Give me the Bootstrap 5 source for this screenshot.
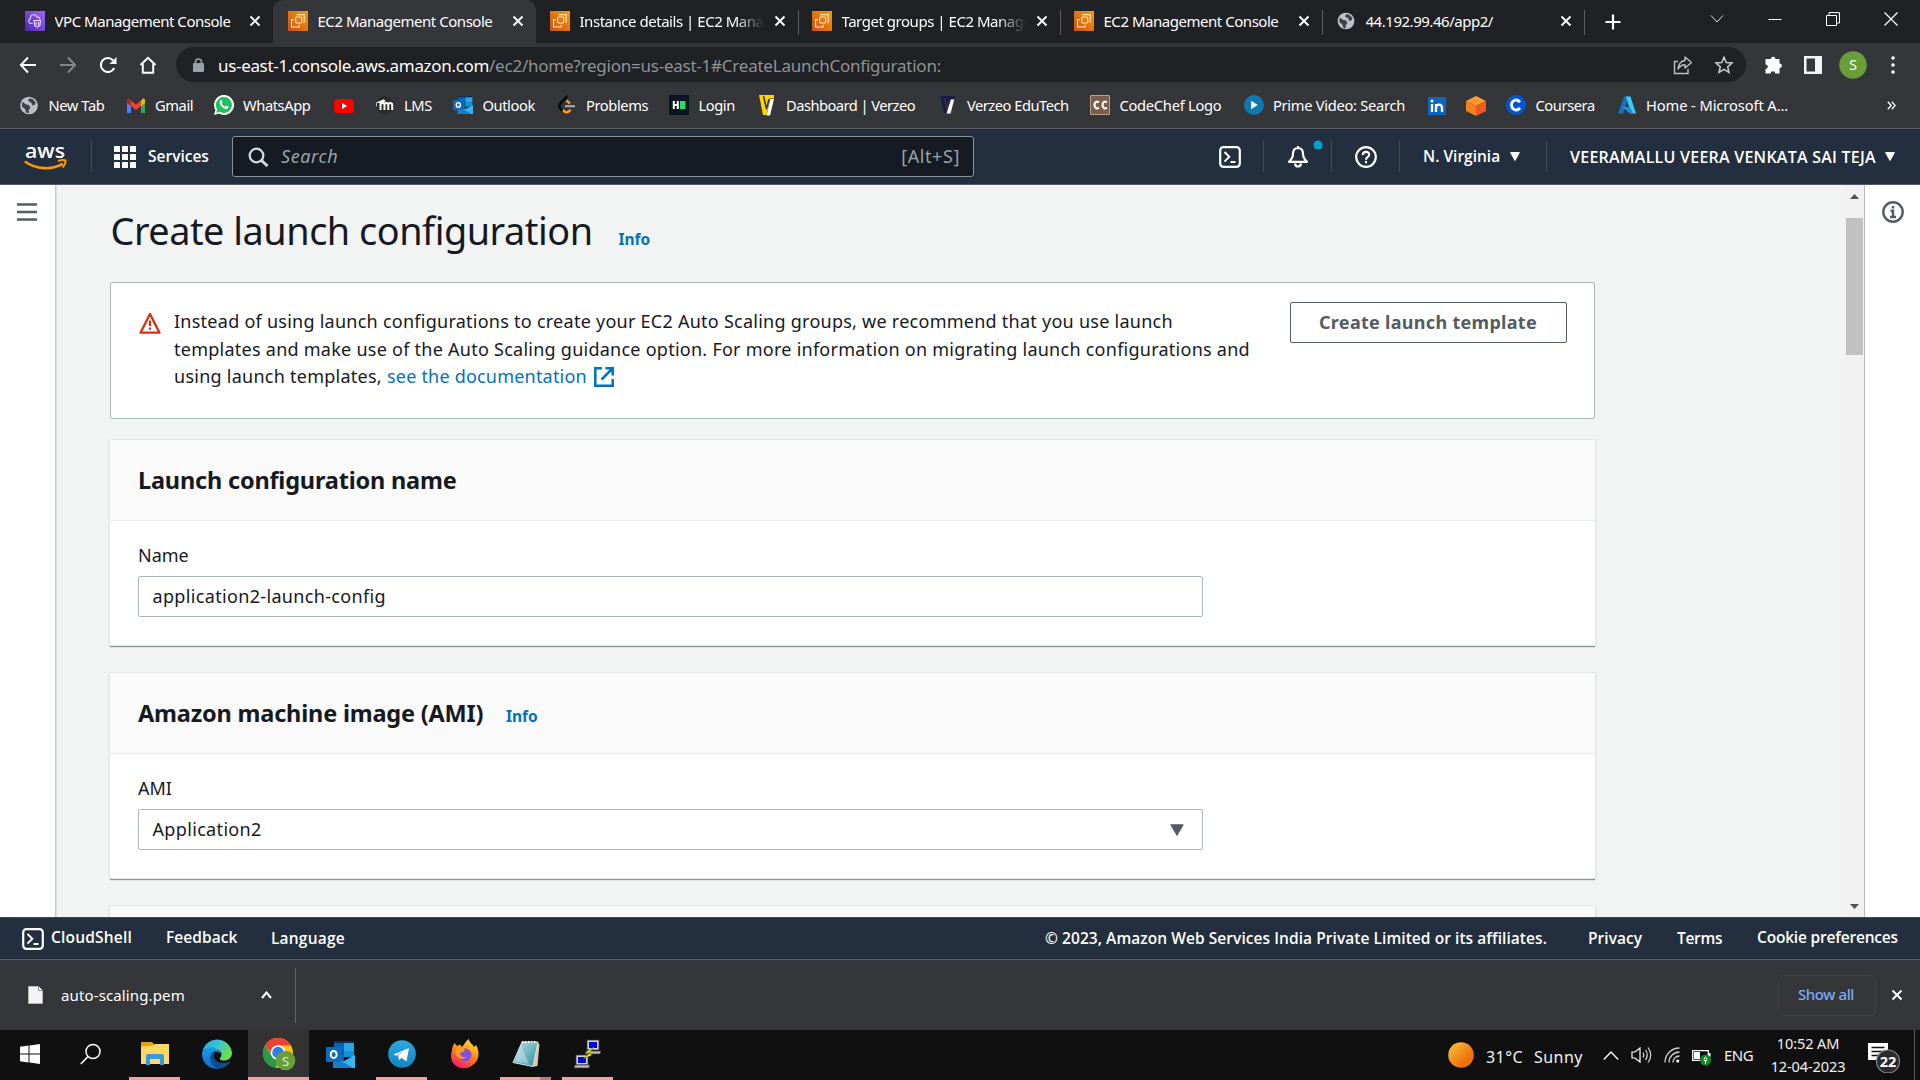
<!DOCTYPE html>
<html lang="en">
<head>
<meta charset="utf-8">
<meta name="viewport" content="width=device-width, initial-scale=1">
<title>EC2 Management Console</title>
<link href="https://cdn.jsdelivr.net/npm/bootstrap@5.3.0/dist/css/bootstrap.min.css" rel="stylesheet">
<style>
body{width:1920px;height:1080px;overflow:hidden;font-family:"Noto Sans","Open Sans",sans-serif;color:#16191f;background:#f2f3f3;font-size:18px}
svg{display:block;flex:none}
a{text-decoration:none;color:inherit}
.txt{white-space:nowrap;flex:none;display:block}
/* browser tabs */
.tabstrip{height:43px;background:#202124;color:#fff;padding-left:11px;font-size:15px;letter-spacing:-.47px}
.tab{width:262px;height:43px;padding:0 0 1px 14px;flex:none;position:relative}
.tab .txt{width:184px;margin-left:9.5px;overflow:hidden;line-height:24px}
.tab .x{margin-left:10px}
.tab.on{background:#35363a;border-radius:10px 10px 0 0;width:263px;padding-left:15px}
.tab.fade-end .txt{-webkit-mask-image:linear-gradient(90deg,#000 155px,transparent 184px);mask-image:linear-gradient(90deg,#000 155px,transparent 184px)}
.tab.sep::after{content:"";position:absolute;right:-1px;top:10px;width:1px;height:25px;background:#5a5c60}
.newtab{margin-left:18px}
.winbtns{padding-right:22px;gap:44px;height:37px;margin-left:auto}
/* toolbar */
.toolbar{height:43px;background:#35363a;padding-left:19px}
.navicons{gap:22px}
.omni{width:1570px;height:35px;border-radius:18px;background:#202124;margin-left:19px;padding:0 12px 0 17px;color:#8f9296;font-size:17px}
.omni .txt{padding-top:2px;letter-spacing:-.233px}
.omni .host{color:#fff;margin-left:14px;letter-spacing:-.326px}
.omniacts{gap:21px}
.puzzle{margin-left:18px}.panelicon{margin-left:20px}.avatar{margin-left:17px}.dots{margin-left:24px}
.marks{height:43px;background:#35363a;border-bottom:1px solid #5f6165;color:#fff;font-size:14.7px;letter-spacing:-.42px;padding:0 24px 3px 19px;box-sizing:border-box}
.bm{gap:9.5px;flex:none}
.bm:nth-child(1){width:106.5px}.bm:nth-child(2){width:88px}.bm:nth-child(3){width:120.5px}.bm:nth-child(4){width:40.5px}
.bm:nth-child(5){width:78.5px}.bm:nth-child(6){width:103.5px}.bm:nth-child(7){width:112.5px}.bm:nth-child(8){width:87.5px}
.bm:nth-child(9){width:181px;letter-spacing:-.54px}.bm:nth-child(10){width:152.5px;letter-spacing:-.5px}.bm:nth-child(11){width:153.5px;letter-spacing:-.28px}.bm:nth-child(12){width:183px;letter-spacing:-.3px}
.bm:nth-child(13){width:39.5px}.bm:nth-child(14){width:40px}.bm:nth-child(15){width:110.5px}.bm:nth-child(16){letter-spacing:-.1px}
/* console header */
.awsbar{height:56px;background:#232f3e;border-bottom:1px solid #545b64;color:#fff;padding-left:24px;font-family:"Open Sans","Noto Sans",sans-serif;font-weight:600;font-size:15.5px}
.vline{width:1px;height:31px;background:#414d5c;flex:none;margin:0 23px 0 22px}
.vline.first{margin:0 22px 0 23px}
.vline.last{margin:0 23px 0 26px}
.services{width:61px;margin-left:12px}
.region{width:87px}
.account{width:315px;font-size:16px;letter-spacing:.24px}
.shellbtn{margin-left:245px}
.belldot{left:26px;top:-6px}
.sbox{width:742px;height:41px;border:1px solid #879596;border-radius:3px;background:#161a22;padding:0 13px 0 15px;color:#95a5a6;font-family:"Noto Sans",sans-serif;font-weight:400;font-size:18px;margin-left:23px;letter-spacing:.6px}
.sbox i{margin-left:12px}
/* page */
.stage{height:732px}
.rail{width:56px;background:#fff;flex:none}
.rail.lft{border-right:1px solid #c5cccd;box-shadow:1px 0 1px rgba(0,0,0,.08);padding:18px 0 0 17px}
.rail.rgt{border-left:1px solid #b8bebf;padding:16px 0 0 17px}
.sbar{width:20px;background:#f1f1f1;flex:none;padding:9px 0 8px 2px}
.thumb{width:17px;height:137px;background:#c1c1c1;margin-top:19px}
.main{width:1788px;padding:21px 249px 0 54px;overflow:hidden;flex:none}
.ttl{font-size:37.8px;line-height:50px;font-weight:400;margin:0 0 0 .5px;letter-spacing:-.46px;width:508px}
.info{color:#0073bb;font-weight:700;font-size:15.5px;line-height:20px}
.note{width:1485px;height:137px;border:1px solid #aab7b8;border-radius:2px;background:#fff;margin-top:26px;padding:19px 27px 0 28px}
.note .warn{margin-top:10px;margin-left:-.5px}
.note p{font-size:18px;line-height:27.5px;margin:6px 0 0 13.5px;letter-spacing:.255px}
.note .pre{width:213px}
.note .lk{color:#0073bb;width:207px;letter-spacing:.2px}
.note .ext{margin-top:4px}
.cbtn{width:277px;height:41px;border:1px solid #545b64;border-radius:2px;color:#545b64;font-weight:700;font-size:18px;line-height:39px;padding:0 0 0 28px;text-align:left;letter-spacing:.3px}
.panel{width:1485px;background:#fff;margin-top:28px;box-shadow:0 0 0 1px #e3e7e7,1px 0 1px #b9c0c1,-1px 0 1px #c9cfd0,0 2px 1px #879596}
.note + .panel{margin-top:21px}
.panel header{height:81px;background:#fafafa;border-bottom:1px solid #eaeded;padding:22px 0 0 28px}
.panel h2{font-size:23.5px;line-height:36px;font-weight:700;margin:0;letter-spacing:-.19px}
.panel h2.withinfo{width:368px}
.fld{padding:20px 0 28px 28px}
.fld .form-label{font-size:18px;line-height:28px;margin:0 0 7px;display:block;width:max-content}
.fld .box{width:1065px;height:41px;border:1px solid #aab7b8;border-radius:2px;font-size:18px;padding:0 18px 0 13.5px;letter-spacing:.34px}
/* footer */
.foot{height:43px;background:#232f3e;border-top:1px solid #3c4857;border-bottom:1px solid #5f6165;color:#fff;padding-left:22px;font-family:"Open Sans","Noto Sans",sans-serif;font-weight:600;font-size:15.5px;letter-spacing:.06px}
.foot .txt{padding-bottom:1px}
.foot .low{padding:1px 0 0}
.f1{width:115px;margin-left:7px;letter-spacing:.19px}.f2{width:105px}.f3{width:774px;letter-spacing:.2px}.f4{width:543px}.f5{width:89px}.f6{width:80px;letter-spacing:-.3px}.f7{letter-spacing:-.19px}
.dl{height:70px;background:#35363a;color:#fff;font-size:15px;padding-left:28px}
.fname{margin-left:18px;width:200px;letter-spacing:.13px}
.dlsep{width:1px;height:55px;background:#606266;margin-left:23px}
.showall{width:98px;height:41px;border:1px solid #404146;border-radius:5px;color:#7baaf7;font-weight:500;padding:0 0 0 19px;line-height:37px;letter-spacing:-.4px}
.dlclose{margin:0 17px 0 15px}
/* taskbar */
.task{height:50px;background:#101010;color:#f2f2f2;font-size:16px}
.app{width:62px;height:50px;flex:none;position:relative;padding-bottom:2px}
.app.win{width:60px}
.app.run::after{content:"";position:absolute;bottom:0;left:5px;width:51px;height:3px;background:#ff9ba3}
.app.files{margin-left:2px}
.app.cur{background:#333;width:61px}.app.cur::after{left:0;width:61px}
.app.two::after{background:linear-gradient(90deg,#ff9ba3 40px,#c9757d 40px)}
.temp{margin-left:12px;width:48px;padding-top:3px;letter-spacing:.43px}
.sky{width:69px;padding-top:3px;letter-spacing:.47px}
.tray{gap:12px}
.lang{margin-left:12px;width:42px;font-size:15px;letter-spacing:-.5px}
.clock{font-size:14.5px;line-height:23px;width:84px;letter-spacing:-.1px}
.bubble{margin:2px 5px 0 18px}
.peek{width:1px;height:50px;background:#5a5a5a;margin:0 5px 0 7px}
</style>
<script src="https://cdn.jsdelivr.net/npm/bootstrap@5.3.0/dist/js/bootstrap.bundle.min.js"></script>
</head>
<body>
<svg width="0" height="0" class="position-absolute">
<defs>
<linearGradient id="gO" x1="0" y1="1" x2="1" y2="0"><stop offset="0" stop-color="#c8511b"/><stop offset="1" stop-color="#f90"/></linearGradient>
<linearGradient id="gP" x1="0" y1="1" x2="1" y2="0"><stop offset="0" stop-color="#4d27a8"/><stop offset="1" stop-color="#a166ff"/></linearGradient>
<linearGradient id="gS" x1="0" y1="0" x2="1" y2="1"><stop offset="0" stop-color="#f8c63a"/><stop offset=".7" stop-color="#f0720f"/></linearGradient>
<linearGradient id="gE" x1="0" y1="0" x2="1" y2=".4"><stop offset="0" stop-color="#2fa8e6"/><stop offset=".5" stop-color="#35c1d8"/><stop offset="1" stop-color="#6be04c"/></linearGradient>
<linearGradient id="gE2" x1="0" y1="0" x2="0" y2="1"><stop offset="0" stop-color="#1b9de2"/><stop offset="1" stop-color="#0b6bd0"/></linearGradient>
<linearGradient id="gF" x1=".8" y1="0" x2=".3" y2="1"><stop offset="0" stop-color="#ffe22e"/><stop offset=".5" stop-color="#ff8a16"/><stop offset="1" stop-color="#f5156c"/></linearGradient>
<linearGradient id="gN" x1="0" y1="0" x2="1" y2="1"><stop offset="0" stop-color="#b9e3ea"/><stop offset="1" stop-color="#2c8ba0"/></linearGradient>
<linearGradient id="gT" x1="0" y1="0" x2="0" y2="1"><stop offset="0" stop-color="#2ba8e2"/><stop offset="1" stop-color="#1584bf"/></linearGradient>
<symbol id="ec2" viewBox="0 0 20 20"><path fill="url(#gO)" d="M0 0h20v20H0z"/><g fill="none" stroke="#fbe5d0" stroke-width="1.1"><rect x="7.7" y="6" width="6" height="6" rx="1"/><path d="M9 4.2V3.6h7.2v7.6h-1M5.8 8.6H3.6V16h7.6v-2.200"/></g></symbol>
<symbol id="vpc" viewBox="0 0 20 20"><path fill="url(#gP)" d="M0 0h20v20H0z"/><g fill="none" stroke="#eadfff" stroke-width="1.1"><path d="M7.500 12.500H6A2.600 2.600 0 0 1 5.400 7.500C5.200 3.200 11 2.500 12 6c1.700-.2 2.800.8 2.800 2.200"/><path d="M9 9.500h6.500l-.6 5c-.4 1.800-4.900 1.800-5.300 0zM11 11v3.600M13.500 11v3.600"/></g></symbol>
<symbol id="x" viewBox="0 0 12 12"><path d="M1.500 1.500l9 9M10.500 1.500l-9 9" stroke="#fff" stroke-width="1.9"/></symbol>
<symbol id="globe" viewBox="0 0 20 20"><circle cx="10" cy="10" r="9.300" fill="#bdc1c6"/><path d="M3 6l4 3 3 .5 1.500 3-2 2.500.5 3-3-.5-1-3.500-3.500-3zM10 2.500l-1 2.500 3.500 2 1 3 3-1 .5-2.500-3.500-3.500z" fill="#3f4246"/></symbol>
<symbol id="shell" viewBox="0 0 22 22"><rect x="1.200" y="1.200" width="19.600" height="19.600" rx="3.200" fill="none" stroke="#fff" stroke-width="2.200"/><path d="M5.500 6l4.800 4.800-4.800 4.800M11.500 16h5" fill="none" stroke="#fff" stroke-width="2"/></symbol>
<symbol id="car" viewBox="0 0 10 9"><path d="M.6.5h8.800L5 8.500z" fill="#fff" stroke="#fff" stroke-linejoin="round"/></symbol>
<symbol id="ol" viewBox="0 0 29 27" preserveAspectRatio="none"><path fill="#0364b8" d="M8 1h10v9H8z"/><path fill="#28a8ea" d="M18 1h10v9H18z"/><path fill="#0a5ea8" d="M8 10h10v9H8z"/><path fill="#1490df" d="M18 10h10v6H18z"/><path fill="#0f2f5c" d="M8 0h20v2H8z"/><path fill="#35b8f1" d="M29 14v13H7V16l11 4z"/><path fill="#1a7fd0" d="M7 15v12h20z"/><rect y="6" width="15.500" height="15" rx="1.300" fill="#0f6cbd"/><ellipse cx="7.700" cy="13.400" rx="3" ry="3.500" fill="none" stroke="#fff" stroke-width="2"/></symbol>
</defs></svg>

<nav class="tabstrip d-flex align-items-center" aria-label="Tabs">
  <div class="tab d-flex align-items-center"><svg width="20" height="20"><use href="#vpc"/></svg><span class="txt">VPC Management Console</span><svg class="x" width="12" height="12"><use href="#x"/></svg></div>
  <div class="tab on d-flex align-items-center"><svg width="20" height="20"><use href="#ec2"/></svg><span class="txt">EC2 Management Console</span><svg class="x" width="12" height="12"><use href="#x"/></svg></div>
  <div class="tab sep fade-end d-flex align-items-center"><svg width="20" height="20"><use href="#ec2"/></svg><span class="txt">Instance details | EC2 Manag</span><svg class="x" width="12" height="12"><use href="#x"/></svg></div>
  <div class="tab sep fade-end d-flex align-items-center"><svg width="20" height="20"><use href="#ec2"/></svg><span class="txt">Target groups | EC2 Manage</span><svg class="x" width="12" height="12"><use href="#x"/></svg></div>
  <div class="tab sep d-flex align-items-center"><svg width="20" height="20"><use href="#ec2"/></svg><span class="txt">EC2 Management Console</span><svg class="x" width="12" height="12"><use href="#x"/></svg></div>
  <div class="tab sep d-flex align-items-center"><svg width="20" height="18"><use href="#globe"/></svg><span class="txt">44.192.99.46/app2/</span><svg class="x" width="12" height="12"><use href="#x"/></svg></div>
  <svg class="newtab" width="22" height="16" viewBox="0 0 18 16"><path d="M9 .5v15M1.500 8h15" stroke="#fff" stroke-width="2.200"/></svg>
  <div class="winbtns d-flex align-items-center align-self-start">
    <svg width="14" height="14" viewBox="0 0 14 14"><path d="M1 3.500l6 6.500 6-6.500" fill="none" stroke="#ddd"/></svg>
    <svg width="14" height="14" viewBox="0 0 14 14"><path d="M.5 7.500h13" stroke="#fff"/></svg>
    <svg width="14" height="14" viewBox="0 0 14 14"><path d="M.5 3.500h10v10H.5zM3 3V.6h10.500V11H11" fill="none" stroke="#fff"/></svg>
    <svg width="14" height="14" viewBox="0 0 14 14"><path d="M.5.500l13 13M13.500.500l-13 13" stroke="#fff" stroke-width="1.200"/></svg>
  </div>
</nav>

<div class="toolbar d-flex align-items-center">
  <div class="navicons d-flex">
    <svg width="18" height="18" viewBox="0 0 18 18"><path d="M9 1.500L1.800 9 9 16.500M2 9h15" fill="none" stroke="#fff" stroke-width="1.900"/></svg>
    <svg width="18" height="18" viewBox="0 0 18 18"><path d="M9 1.500L16.200 9 9 16.500M16 9H1" fill="none" stroke="#85878a" stroke-width="1.900"/></svg>
    <svg width="18" height="18" viewBox="0 0 18 18"><path d="M15.200 12A7 7 0 1 1 14 4.200" fill="none" stroke="#fff" stroke-width="2"/><path d="M17.500 1v7h-7z" fill="#fff"/></svg>
    <svg width="18" height="18" viewBox="0 0 18 18"><path d="M1.500 9L9 1.800 16.500 9M3.800 7.500v9.300h10.400V7.500" fill="none" stroke="#fff" stroke-width="1.900"/></svg>
  </div>
  <div class="omni d-flex align-items-center">
    <svg width="11" height="14" viewBox="0 0 11 14"><rect y="5" width="11" height="9" rx="1" fill="#9aa0a6"/><path d="M2.500 6V4a3 3 0 0 1 6 0v2" fill="none" stroke="#9aa0a6" stroke-width="1.600"/></svg>
    <span class="txt host">us-east-1.console.aws.amazon.com</span><span class="txt">/ec2/home?region=us-east-1#CreateLaunchConfiguration:</span>
    <div class="omniacts d-flex ms-auto">
      <svg width="20" height="20" viewBox="0 0 20 20"><path d="M5 6.500H1.500v12h13.500V14" fill="none" stroke="#bdc1c6" stroke-width="1.400"/><path d="M12 2l6.500 5.500L12 13V9.800C8.500 9.800 6.800 11 5 14c.5-4.500 2.500-8 7-8.500z" fill="none" stroke="#bdc1c6" stroke-width="1.400" stroke-linejoin="round"/></svg>
      <svg width="20" height="20" viewBox="0 0 20 20"><path d="M10 2.200l2.300 5.300 5.700.5-4.300 3.800 1.300 5.600-5-3-5 3 1.300-5.600L2 8l5.700-.5z" fill="none" stroke="#c4c7cb" stroke-width="1.600"/></svg>
    </div>
  </div>
  <svg class="puzzle" width="20" height="20" viewBox="0 0 20 20"><path d="M7 4a2.200 2.200 0 0 1 4.400 0h4.100v4.400a2.300 2.300 0 0 1 0 4.600v5.500h-4.300a2.300 2.300 0 0 0-4.600 0H1.500v-4.400a2.300 2.300 0 0 0 0-4.600V4z" fill="#fff"/></svg>
  <svg class="panelicon" width="18" height="18" viewBox="0 0 18 18"><path d="M0 0h18v18H0zM2.500 2.500v13h8.500v-13z" fill="#f1f3f4" fill-rule="evenodd"/></svg>
  <svg class="avatar" width="28" height="28" viewBox="0 0 28 28"><circle cx="14" cy="14" r="13.800" fill="#689f38"/><text x="14" y="19" font-size="14" fill="#fff" text-anchor="middle">S</text></svg>
  <svg class="dots" width="4" height="18" viewBox="0 0 4 18" fill="#fff"><circle cx="2" cy="2" r="1.800"/><circle cx="2" cy="9" r="1.800"/><circle cx="2" cy="16" r="1.800"/></svg>
</div>

<div class="marks d-flex align-items-center">
  <a class="bm d-flex align-items-center" href="#"><svg width="20" height="19"><use href="#globe"/></svg><span class="txt">New Tab</span></a>
  <a class="bm d-flex align-items-center" href="#"><svg width="20" height="15" viewBox="0 0 20 15"><path fill="#4285f4" d="M1 4l4 3v8H1z"/><path fill="#34a853" d="M15 7l4-3v11h-4z"/><path fill="#fbbc04" d="M15 2.500l1.500-1.500C18 0 19 1 19 2.200V5l-4 3z"/><path fill="#ea4335" d="M5 2.500l5 4 5-4V8l-5 4-5-4z"/><path fill="#c5221f" d="M1 5V2.200C1 1 2 0 3.500 1L5 2.500V8z"/></svg><span class="txt">Gmail</span></a>
  <a class="bm d-flex align-items-center" href="#"><svg width="20" height="20" viewBox="0 0 20 20"><path fill="#fff" d="M0 20l1.400-5A10 10 0 1 1 5 18.600z"/><path fill="#1fc15c" d="M2.200 17.800l1-3.500a8 8 0 1 1 2.600 2.500z"/><path fill="#fff" d="M6.500 5.200c1-.6 1.400 0 2 1.800 0 .7-.8 1-.7 1.400.9 1.700 2 2.700 3.500 3.200.5-.2.900-1.200 1.300-1.100l2 1c.3 1.600-1.300 2.500-2.500 2.500-3.200-.5-6-3.300-6.500-6.200 0-1 .3-2 .9-2.600z"/></svg><span class="txt">WhatsApp</span></a>
  <a class="bm d-flex align-items-center" href="#"><svg width="20" height="14" viewBox="0 0 20 14"><rect width="20" height="14" rx="3.500" fill="#f00"/><path d="M8 4l5.200 3L8 10z" fill="#fff"/></svg></a>
  <a class="bm d-flex align-items-center" href="#"><svg width="20" height="20" viewBox="0 0 20 20"><circle cx="10" cy="10" r="9" fill="#2a2a2c"/><path d="M5.500 15V9.800c0-2.400 4-2.400 4 0V15M9.500 9.800c0-2.400 3.800-2.400 3.800 0V15M13.300 9.800c0-2.400 3.900-2.400 3.900 0V15" fill="none" stroke="#fff" stroke-width="2"/><path d="M1 7.500l8-3.300 1.500 2.300L6 8.500z" fill="#fff"/><path d="M1.500 7.500v4" stroke="#ddd" stroke-width=".8"/></svg><span class="txt">LMS</span></a>
  <a class="bm d-flex align-items-center" href="#"><svg width="20" height="18"><use href="#ol"/></svg><span class="txt">Outlook</span></a>
  <a class="bm d-flex align-items-center" href="#"><svg width="20" height="20" viewBox="0 0 20 20"><path d="M9.500 5.500l3.500 3M5.500 14.500c3 4 5.500 3.500 8 .3" fill="none" stroke="#ffa116" stroke-width="2.400"/><path d="M10.500.800L3.800 7.800c-2.300 2.300-2.300 4 0 6.400l1.700 1.600" fill="none" stroke="#0a0a0a" stroke-width="2.500"/><path d="M8 11.200h10" stroke="#b3b3b3" stroke-width="2"/></svg><span class="txt">Problems</span></a>
  <a class="bm d-flex align-items-center" href="#"><svg width="20" height="20" viewBox="0 0 20 20"><path fill="#0b1520" d="M0 0h20v20H0z"/><path d="M4.800 6v8M8.800 6v8M4.800 10h4" stroke="#fff" stroke-width="2"/><path fill="#1fe069" d="M11 6h5.500v8H11z"/></svg><span class="txt">Login</span></a>
  <a class="bm d-flex align-items-center" href="#"><svg width="20" height="21" viewBox="0 0 20 21"><path fill="#ffd500" d="M2 0h15v3.500h-4L9.500 20 6 20z"/><path d="M6.500 1l3 13L12 4" fill="none" stroke="#35363a" stroke-width="1.500"/><path fill="#fff" d="M13.500 4H17l-4 16.500H9.500z"/></svg><span class="txt">Dashboard | Verzeo</span></a>
  <a class="bm d-flex align-items-center" href="#"><svg width="20" height="20" viewBox="0 0 20 20"><path fill="#181c48" d="M2 1h15l-.5 3h-4L9 18 6 18z"/><path d="M6.500 3l2.500 10 2.500-8" fill="none" stroke="#35363a" stroke-width="1.300"/><path fill="#fff" d="M13 4.500h3.200L12.500 18.500H8.500z"/></svg><span class="txt">Verzeo EduTech</span></a>
  <a class="bm d-flex align-items-center" href="#"><svg width="20" height="20" viewBox="0 0 20 20"><path fill="#7b5e4a" d="M0 0h20v20H0z"/><path d="M.5.500h19v19H.5z" fill="none" stroke="#b79f8c"/><path d="M8.800 7.500C7 5.500 4.500 7 4.500 10s2.500 4.500 4.300 2.500M16.800 7.500c-1.800-2-4.300-.5-4.300 2.500s2.500 4.500 4.300 2.500" fill="none" stroke="#fff" stroke-width="2.200"/></svg><span class="txt">CodeChef Logo</span></a>
  <a class="bm d-flex align-items-center" href="#"><svg width="20" height="20" viewBox="0 0 20 20"><circle cx="10" cy="10" r="10" fill="#0f79af"/><path d="M7.200 5.800l6.500 4.200-6.500 4.200z" fill="#fff"/></svg><span class="txt">Prime Video: Search</span></a>
  <a class="bm d-flex align-items-center" href="#"><svg width="20" height="18" viewBox="0 0 20 18"><path fill="#0a66c2" d="M1 0h18v18H1z"/><path d="M5 7v8M9 15V7M9 11c0-4.500 6-4.500 6 0v4" fill="none" stroke="#fff" stroke-width="2.300"/><circle cx="5" cy="4" r="1.500" fill="#fff"/></svg></a>
  <a class="bm d-flex align-items-center" href="#"><svg width="20" height="20" viewBox="0 0 20 20"><path fill="#ff9a2e" d="M10 0l10 5-10 5L0 5z"/><path fill="#f58220" d="M0 5l10 5v10L0 15z"/><path fill="#ee5a1c" d="M20 5l-10 5v10l10-5z"/></svg></a>
  <a class="bm d-flex align-items-center" href="#"><svg width="20" height="20" viewBox="0 0 20 20"><circle cx="10" cy="10" r="10" fill="#0056d2"/><path d="M14 7.200c-3-4-8.500-2-8.500 2.800s5.500 6.800 8.500 2.800" fill="none" stroke="#fff" stroke-width="2.800"/></svg><span class="txt">Coursera</span></a>
  <a class="bm d-flex align-items-center" href="#"><svg width="20" height="18" viewBox="0 0 20 18"><path fill="#1a6fc0" d="M7 .5h5.500L6 17.500H1z"/><path fill="#3ccbf4" d="M9 .5h4.500L19 17.500h-5z"/><path fill="#1b8fe0" d="M5 11h8l3 6.500h-3z"/></svg><span class="txt">Home - Microsoft A...</span></a>
  <svg class="ms-auto" width="9" height="9" viewBox="0 0 9 9"><path d="M.8.800l3.400 3.700L.8 8.200M4.800.800l3.400 3.700-3.400 3.700" fill="none" stroke="#fff" stroke-width="1.300"/></svg>
</div>

<header class="awsbar d-flex align-items-center">
  <svg class="overflow-visible" width="44" height="30" viewBox="0 0 44 30"><text x="1" y="15.500" font-family="Open Sans" font-weight="600" font-size="20" fill="#fff" textLength="40" lengthAdjust="spacingAndGlyphs">aws</text><path d="M.8 19.500c11 8 27 9 38 2.200" fill="none" stroke="#f90" stroke-width="2.600"/><path d="M34 19c3-1 6-1.300 7.500-.5.500 1.500-1 5-3 7" fill="none" stroke="#f90" stroke-width="2"/></svg>
  <div class="vline first"></div>
  <svg width="22" height="22" viewBox="0 0 22 22" fill="#fff"><path d="M0 0h6v6H0zM8 0h6v6H8zM16 0h6v6h-6zM0 8h6v6H0zM8 8h6v6H8zM16 8h6v6h-6zM0 16h6v6H0zM8 16h6v6H8zM16 16h6v6h-6z"/></svg>
  <span class="txt services">Services</span>
  <div class="sbox d-flex align-items-center"><svg width="21" height="20" viewBox="0 0 21 20"><circle cx="8.500" cy="8.500" r="6.800" fill="none" stroke="#d5dbdb" stroke-width="2.300"/><path d="M13.500 13.500l6 5.500" stroke="#d5dbdb" stroke-width="3"/></svg><i class="txt">Search</i><span class="txt ms-auto">[Alt+S]</span></div>
  <svg class="shellbtn" width="22" height="22"><use href="#shell"/></svg>
  <div class="vline"></div>
  <div class="position-relative"><svg width="22" height="22" viewBox="0 0 22 22"><path d="M11 2c-3.800 0-5 3-5 6 0 4-1.500 5.500-4 7.800h18C17.500 13.500 16 12 16 8c0-3-1.200-6-5-6z" fill="none" stroke="#fff" stroke-width="2.200" stroke-linejoin="round"/><path d="M8 17.500c.5 4 5.500 4 6 0M11 0v2" fill="none" stroke="#fff" stroke-width="2.200"/></svg><svg class="belldot position-absolute" width="10" height="10"><circle cx="5" cy="5" r="4.600" fill="#00a1c9"/></svg></div>
  <div class="vline"></div>
  <svg width="22" height="22" viewBox="0 0 22 22"><circle cx="11" cy="11" r="9.800" fill="none" stroke="#fff" stroke-width="2.200"/><path d="M7.800 9c0-4.300 6.600-4 6.400-.3-.1 2.300-3.200 2.200-3.200 5M11 15v2.200" fill="none" stroke="#fff" stroke-width="2.100"/></svg>
  <div class="vline"></div>
  <span class="txt region">N. Virginia</span><svg width="10" height="9"><use href="#car"/></svg>
  <div class="vline last"></div>
  <span class="txt account">VEERAMALLU VEERA VENKATA SAI TEJA</span><svg width="10" height="9"><use href="#car"/></svg>
</header>

<div class="stage d-flex">
  <aside class="rail lft"><svg width="20" height="18" viewBox="0 0 20 18"><path d="M0 1.500h20M0 9h20M0 16.500h20" stroke="#545b64" stroke-width="2.500"/></svg></aside>
  <main class="main">
    <div class="d-flex align-items-baseline"><h1 class="ttl txt">Create launch configuration</h1><a class="info txt" href="#">Info</a></div>
    <section class="note d-flex align-items-start">
      <svg class="warn" width="22" height="22" viewBox="0 0 22 22"><path d="M11 2L20.500 20.700H1.500z" fill="none" stroke="#d13212" stroke-width="2.300" stroke-linejoin="round"/><path d="M11 8.500v5.500M11 15.500v2.300" stroke="#d13212" stroke-width="2.300"/></svg>
      <p><span class="txt">Instead of using launch configurations to create your EC2 Auto Scaling groups, we recommend that you use launch</span><span class="txt">templates and make use of the Auto Scaling guidance option. For more information on migrating launch configurations and</span><span class="d-flex"><span class="txt pre">using launch templates,</span><a class="lk txt" href="#">see the documentation</a><svg class="ext" width="20" height="20" viewBox="0 0 20 20"><path d="M8 1.300H1.300v17.400h17.400V12M11.500 1.300h7.200v7.200M18 2L7.500 12.500" fill="none" stroke="#0073bb" stroke-width="2.500"/></svg></span></p>
      <button class="cbtn btn ms-auto flex-shrink-0"><span class="txt">Create launch template</span></button>
    </section>
    <section class="panel">
      <header><h2 class="txt">Launch configuration name</h2></header>
      <div class="fld"><label class="form-label">Name</label><div class="box d-flex align-items-center"><span class="txt">application2-launch-config</span></div></div>
    </section>
    <section class="panel">
      <header class="d-flex align-items-baseline"><h2 class="txt withinfo">Amazon machine image (AMI)</h2><a class="info txt" href="#">Info</a></header>
      <div class="fld"><label class="form-label">AMI</label><div class="box d-flex align-items-center"><span class="txt">Application2</span><svg class="ms-auto" width="14" height="12" viewBox="0 0 14 12"><path d="M.8.800h12.400L7 11.400z" fill="#545b64" stroke="#545b64" stroke-linejoin="round"/></svg></div></div>
    </section>
    <section class="panel"><header></header></section>
  </main>
  <div class="sbar d-flex flex-column"><svg class="ms-1" width="9" height="5"><path d="M0 5l4.500-5L9 5z" fill="#505050"/></svg><div class="thumb"></div><svg class="ms-1 mt-auto" width="9" height="5"><path d="M0 0l4.500 5L9 0z" fill="#505050"/></svg></div>
  <aside class="rail rgt"><svg width="22" height="22" viewBox="0 0 22 22"><circle cx="11" cy="11" r="9.700" fill="none" stroke="#545b64" stroke-width="2.400"/><path d="M8.500 9.800H11v6M8 16h6M11 5v2.500" fill="none" stroke="#545b64" stroke-width="2.400"/></svg></aside>
</div>

<footer class="foot d-flex align-items-center">
  <svg width="22" height="22"><use href="#shell"/></svg>
  <span class="txt f1">CloudShell</span><span class="txt f2">Feedback</span><span class="txt low f3">Language</span>
  <span class="txt low f4">© 2023, Amazon Web Services India Private Limited or its affiliates.</span><span class="txt low f5">Privacy</span><span class="txt low f6">Terms</span><span class="txt f7">Cookie preferences</span>
</footer>

<div class="dl d-flex align-items-center">
  <svg width="15" height="18" viewBox="0 0 15 18"><path d="M.5.500h10l4 4v13H.5z" fill="#f4f4f4" stroke="#b5b5b5"/><path d="M10.500.500v4h4" fill="#fff" stroke="#8a8a8a"/></svg>
  <span class="txt fname">auto-scaling.pem</span>
  <svg width="11" height="8" viewBox="0 0 11 8"><path d="M1 7l4.500-5.500L10 7" fill="none" stroke="#fff" stroke-width="2"/></svg>
  <div class="dlsep"></div>
  <div class="showall ms-auto"><span class="txt">Show all</span></div>
  <svg class="dlclose" width="12" height="12"><use href="#x"/></svg>
</div>

<div class="task d-flex align-items-center">
  <div class="app win d-flex align-items-center justify-content-center"><svg width="20" height="20" viewBox="0 0 20 20"><path d="M0 2.700l8.500-1.200v8H0zM9.500 1.400L20 0v9.500H9.500zM0 10.500h8.500v8L0 17.300zM9.500 10.500H20V20l-10.500-1.400z" fill="#fff"/></svg></div>
  <div class="app d-flex align-items-center justify-content-center"><svg width="22" height="22" viewBox="0 0 22 22"><circle cx="13" cy="8.500" r="7" fill="none" stroke="#fff" stroke-width="1.500"/><path d="M8 13.500L.8 21" stroke="#fff" stroke-width="1.600"/></svg></div>
  <div class="app run files d-flex align-items-center justify-content-center"><svg width="28" height="24" viewBox="0 0 28 24"><path fill="#e8a200" d="M0 0h11l2 2v5H0z"/><path fill="#ffd766" d="M0 4.500l12-1 2-1.500h14v20H0z"/><path fill="#3a96dd" d="M5 14q0-2 2-2h14q2 0 2 2v9h-4v-6h-10v6H5z"/></svg></div>
  <div class="app d-flex align-items-center justify-content-center"><svg width="30" height="30" viewBox="0 0 30 30"><path d="M.5 12A15 15 0 0 1 30 14c0 5-4 7.500-8 7.500-3 0-5-1.200-4-2.500 3-3.500 1-8-4-8.500C9 9 3 9 .5 12z" fill="url(#gE)"/><path d="M0 15C0 9 8 6.500 13.500 9.500c3 1.500 4.500 4 4.500 6-1-2.500-3-3.500-5-3-4 1-5.500 6-3.500 10.500C11 27 15 29.500 18.500 29.500 8 31.500 0 24 0 15z" fill="url(#gE2)"/><path d="M9.500 14.500C6.500 22 11 29 18.500 29.500c4-.7 7.500-3 9.500-6 .5-1-.3-1.300-1-.8-5 2.600-12 1.300-14.500-2.700-1-2-.8-4 .5-6-1.500-.3-2.700-.2-3.500.5z" fill="#114a8f"/></svg></div>
  <div class="app run cur d-flex align-items-center justify-content-center"><svg width="34" height="34" viewBox="0 0 34 34"><circle cx="16" cy="16" r="15" fill="#fbc116"/><path fill="#ea4335" d="M3 8.500a15 15 0 0 1 26 0H16l-5 10.500z"/><path fill="#2a9a48" d="M3 8.500L11 21l6 2-3.500 8A15 15 0 0 1 3 8.500z"/><circle cx="16" cy="15.500" r="7.300" fill="#fff"/><circle cx="16" cy="15.500" r="5.700" fill="#2f7de9"/><circle cx="23.500" cy="23.500" r="9.800" fill="#689f38"/><text x="23.500" y="28.500" text-anchor="middle" font-size="13" fill="#dfeccf">S</text></svg></div>
  <div class="app d-flex align-items-center justify-content-center"><svg width="29" height="27"><use href="#ol"/></svg></div>
  <div class="app run d-flex align-items-center justify-content-center"><svg width="28" height="28" viewBox="0 0 28 28"><circle cx="14" cy="14" r="13.800" fill="url(#gT)"/><path d="M5.500 14.500L21 8l-2.500 13.500-5-3.700-2.500 2.400-.8-4.600L17 10l-8.300 5.800z" fill="#fff"/></svg></div>
  <div class="app d-flex align-items-center justify-content-center"><svg width="29" height="30" viewBox="0 0 29 30"><path d="M2 11c0-3 1.500-5 2.500-7l2.500 3 3-1.500L12 8l3-4c1-2 2.500-3 4-4 0 4 4 5 5 8l2-2c4 7 3 13-1 18-6 7-17 7-22 0-2.500-4-2.500-8-1-13z" fill="url(#gF)"/><circle cx="15" cy="16" r="6.500" fill="#8250e0"/><path d="M7 9c3-1 6 0 8 2-1 2-4 2-5 3 0 3 3 5 6.500 4-3 3-8.500 2-10.500-2-1-3-.5-5 1-7z" fill="#ff9b1a"/></svg></div>
  <div class="app run two d-flex align-items-center justify-content-center"><svg width="30" height="28" viewBox="0 0 30 28"><path d="M26 3l2.500 1-2 22-5.500 1z" fill="#d9c9a8"/><path d="M11 2h16l-5 24.500L2 22.500z" fill="url(#gN)" stroke="#d8e4e6"/><path d="M11 2h15" stroke="#fff" stroke-width="2" stroke-dasharray="1.500 1.500"/><path d="M10 5L4 21l14 3z" fill="#e3f3f5" opacity=".4"/></svg></div>
  <div class="app run d-flex align-items-center justify-content-center"><svg width="28" height="30" viewBox="0 0 28 30"><g stroke="#333" stroke-width=".8"><path d="M13 1h12v10H13z" fill="#d6d6d6"/><path d="M12 12h15l-1 3H11z" fill="#c0c0c0"/><path d="M2 16h12v10H2z" fill="#d6d6d6"/><path d="M1 26h15l-1 3H0z" fill="#c0c0c0"/></g><path d="M15 3h8v6h-8zM4 18h8v6H4z" fill="#0000e8"/><path d="M20 8l-8 5 4 1-7 6 9-4-3-2z" fill="#ff0" stroke="#6b6b00" stroke-width=".5"/></svg></div>
  <svg class="ms-auto" width="26" height="26"><circle cx="13" cy="13" r="12.800" fill="url(#gS)"/></svg>
  <span class="txt temp">31°C</span><span class="txt sky">Sunny</span>
  <div class="tray d-flex align-items-center">
    <svg width="16" height="9" viewBox="0 0 16 9"><path d="M.8 8.500L8 1l7.200 7.500" fill="none" stroke="#fff" stroke-width="1.300"/></svg>
    <svg width="21" height="18" viewBox="0 0 21 18"><path d="M1 6h3l5-4v14l-5-4H1z" fill="none" stroke="#fff" stroke-width="1.200"/><path d="M12 6.500q1.500 2.500 0 5M14.500 4q3.500 5 0 10M17 1.500q5.500 7.500 0 15" fill="none" stroke="#ddd" stroke-width="1.200"/></svg>
    <svg width="16" height="16" viewBox="0 0 16 16"><path d="M1 15.500A14.500 14.500 0 0 1 15.500 1M5 15.500A10.500 10.500 0 0 1 15.500 5M9 15.500A6.500 6.500 0 0 1 15.500 9" fill="none" stroke="#cfcfcf" stroke-width="1.300"/><circle cx="13.700" cy="14" r="1.600" fill="#fff"/></svg>
    <svg class="mt-1" width="20" height="18" viewBox="0 0 20 18"><path d="M.7 2.700h15.600v9.600H.7z" fill="none" stroke="#fff" stroke-width="1.300"/><path d="M2 4h6v7H2zM17 5h1.500v4H17z" fill="#fff"/><circle cx="13.500" cy="12" r="5.600" fill="#0b8a1d"/><path d="M13.500 8.800q3 3 0 5-3-2 0-5zM13.500 12v4" fill="none" stroke="#fff"/></svg>
  </div>
  <span class="txt lang">ENG</span>
  <div class="clock d-flex flex-column align-items-center"><span class="txt">10:52 AM</span><span class="txt">12-04-2023</span></div>
  <svg class="bubble" width="34" height="34" viewBox="0 0 34 34"><path d="M0 4h20v17h-7l-4 4v-4H0z" fill="#fff"/><path d="M3.500 8.500h13M3.500 12.500h13M3.500 16.500h8" stroke="#111" stroke-width="1.300"/><circle cx="20" cy="22.500" r="11.500" fill="#2b2b2b" stroke="#8a8a8a" stroke-width="1.200"/><text x="20" y="28" text-anchor="middle" font-size="14.500" font-weight="700" fill="#fff">22</text></svg>
  <div class="peek"></div>
</div>
</body>
</html>
